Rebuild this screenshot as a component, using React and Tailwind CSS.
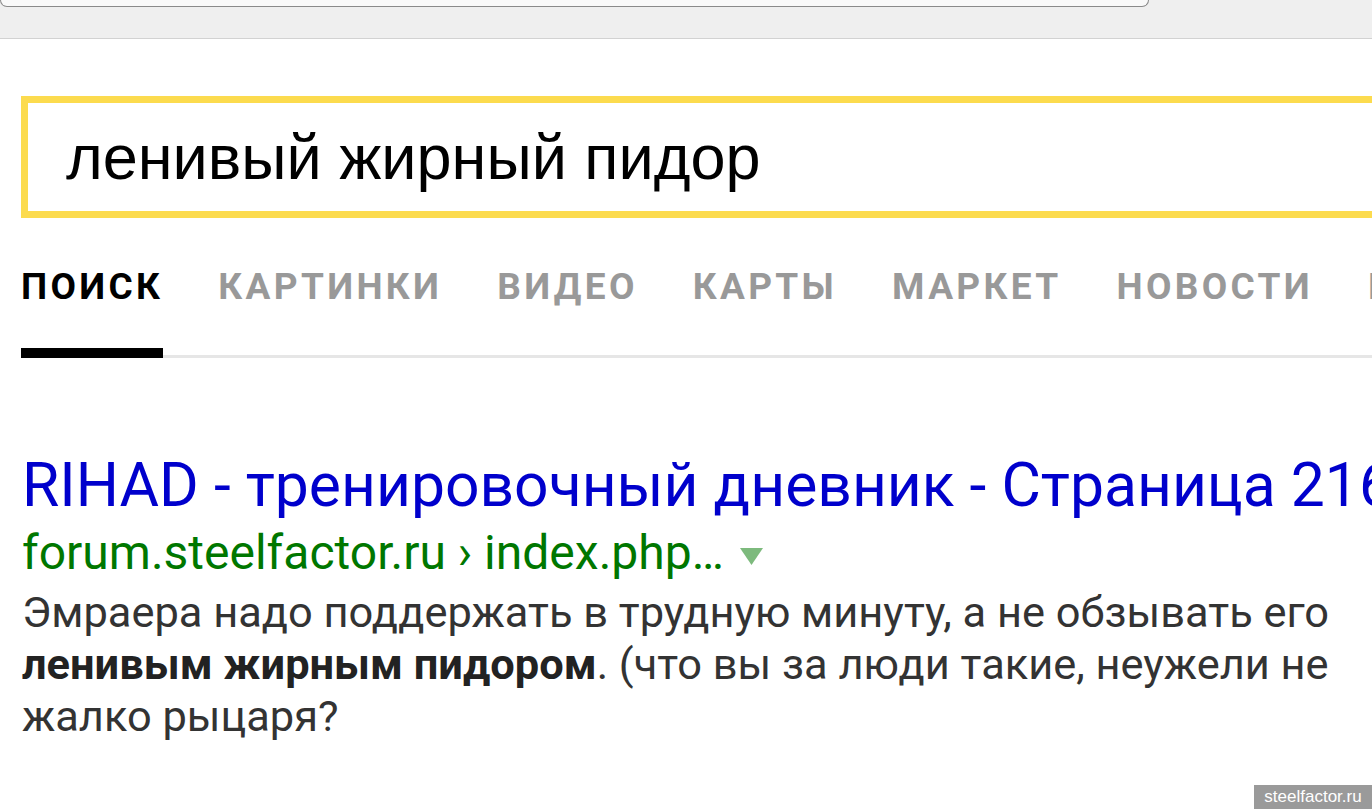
export default function App() {
  const tabs = ["КАРТИНКИ", "ВИДЕО", "КАРТЫ", "МАРКЕТ", "НОВОСТИ", "ПЕРЕВОДЧИК"];
  return (
    <div className="w-[1372px] h-[809px] overflow-hidden bg-white relative" style={{ fontFamily: "Roboto, 'Noto Sans', sans-serif" }}>
      {/* top chrome */}
      <div className="h-[39px] bg-[#efefef] border-b border-[#d2d2d2]">
        <div className="w-[1149px] h-[7px] bg-[#f9f9f9] border-b border-r border-l border-[#8a8a8a] rounded-b-[7px]"></div>
      </div>

      {/* search box */}
      <div className="mt-[57px] ml-[21px] w-[1420px] h-[122px] border-[7px] border-[#fcdb4e] flex items-center pl-[38px]">
        <span className="text-[63px] text-black leading-none" style={{ fontFamily: "'Liberation Sans', Arial, sans-serif" }}>ленивый жирный пидор</span>
      </div>

      {/* tabs */}
      <div className="ml-[21px] mt-[50px] flex items-end whitespace-nowrap">
        <div className="flex flex-col">
          <span className="text-[37px] font-bold tracking-[0.09em] text-black leading-none h-[80px]">ПОИСК</span>
          <div className="h-[10px] w-[142px] bg-black"></div>
        </div>
        <div className="flex-1 flex flex-col">
          <div className="flex gap-[55px] pl-[55px] h-[80px]">
            {tabs.map((t) => (
              <span key={t} className="text-[37px] font-bold tracking-[0.09em] text-[#999999] leading-none">{t}</span>
            ))}
          </div>
          <div className="h-[10px] flex flex-col justify-end">
            <div className="h-[3px] bg-[#e6e6e6]"></div>
          </div>
        </div>
      </div>

      {/* result */}
      <div className="ml-[22px] mt-[97px] whitespace-nowrap flex flex-col">
        <div className="text-[60.6px] leading-[62px] text-[#0000cc]">RIHAD - тренировочный дневник - Страница 216</div>
        <div className="mt-[5px] text-[48px] leading-[62px] text-[#007700] flex items-center">
          <span>forum.steelfactor.ru › index.php…</span>
          <svg width="23" height="17" viewBox="0 0 23 17" className="ml-[16px] mt-[6px]">
            <polygon points="0,0 23,0 11.5,17" fill="#7dba7d" />
          </svg>
        </div>
        <div className="mt-[3px] text-[43.4px] leading-[52px] text-[#333333]">
          Эмраера надо поддержать в трудную минуту, а не обзывать его
          <br />
          <b className="font-bold text-[#222]">ленивым жирным пидором</b>. (что вы за люди такие, неужели не
          <br />
          жалко рыцаря?
        </div>
      </div>

      {/* watermark */}
      <div className="absolute right-0 bottom-0 h-[24px] w-[118px] bg-[#9a9a9a] text-white text-[17px] leading-[24px] text-center" style={{ fontFamily: "'Liberation Sans', Arial, sans-serif" }}>
        steelfactor.ru
      </div>
    </div>
  );
}
